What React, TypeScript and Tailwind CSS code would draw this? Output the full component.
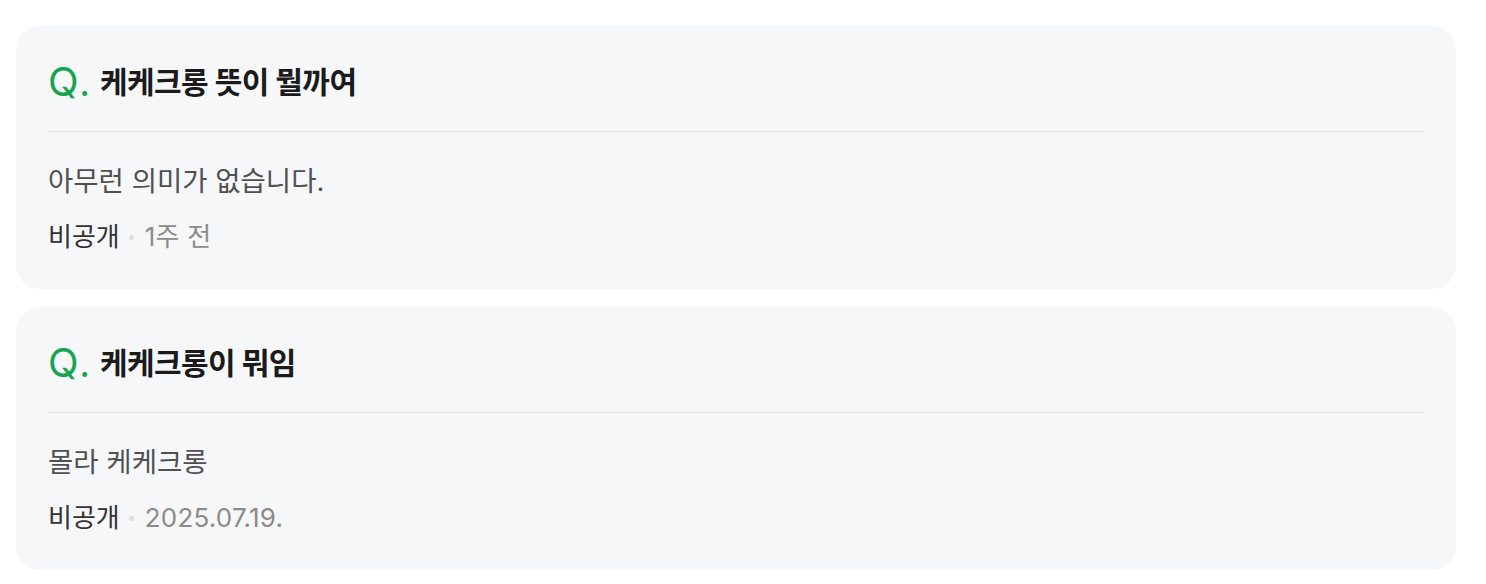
const font = { fontFamily: 'Inter, "Noto Sans CJK KR", sans-serif' }

type Item = { q: string; a: string; date: string }

const items: Item[] = [
  { q: '케케크롱 뜻이 뭘까여', a: '아무런 의미가 없습니다.', date: '1주 전' },
  { q: '케케크롱이 뭐임', a: '몰라 케케크롱', date: '2025.07.19.' },
]

function QnaCard({ item }: { item: Item }) {
  return (
    <div className="rounded-[24px] bg-[#f6f7f9] px-8 pt-[30px] pb-[35px]">
      <div className="flex h-[52px] items-center">
        <span className="mr-[10px] flex items-baseline leading-none text-[#17a352]">
          <span className="text-[40px] font-normal">Q</span>
          <span className="ml-[1px] text-[34px] font-medium">.</span>
        </span>
        <h3 className="text-[30px] font-bold tracking-[-0.55px] text-[#1b1b1b]">{item.q}</h3>
      </div>
      <div className="mt-[23px] h-px bg-[#e3e5e8]" />
      <p className="mt-8 text-[27.5px] leading-[34px] text-[#505050]">{item.a}</p>
      <div className="mt-[22px] flex items-center text-[26px] leading-[34px]">
        <span className="text-[#333]">비공개</span>
        <span className="ml-[9px] mr-[11px] h-[5px] w-[5px] rounded-full bg-[#dcdee1]" />
        <span className="tracking-[0.2px] text-[#8b8b8b]">{item.date}</span>
      </div>
    </div>
  )
}

export default function App() {
  return (
    <div className="min-h-screen bg-white" style={font}>
      <div className="ml-4 flex w-[1440px] flex-col gap-[18px] pt-[26px]">
        {items.map((it) => (
          <QnaCard key={it.q} item={it} />
        ))}
      </div>
    </div>
  )
}
